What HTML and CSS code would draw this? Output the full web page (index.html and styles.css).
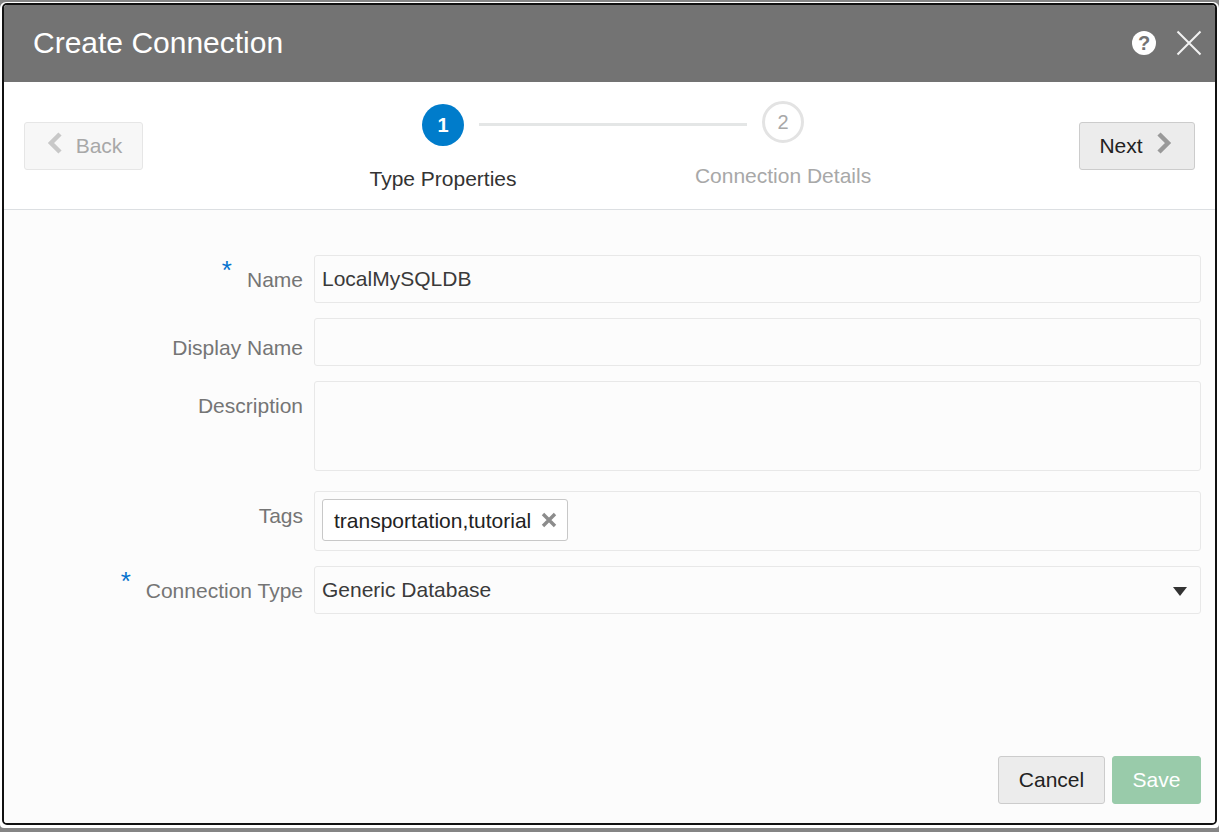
FILE: index.html
```html
<!DOCTYPE html>
<html lang="en">
<head>
    <meta charset="UTF-8">
    <meta name="viewport" content="width=device-width, initial-scale=1.0">
    <title>Create Connection</title>
    <link rel="stylesheet" href="styles.css">
</head>
<body>
    <div class="frame">
        <div class="dialog">
            <div class="header">
                <span class="title">Create Connection</span>
                <span class="help">?</span>
                <svg class="close" width="26" height="26" viewBox="0 0 26 26">
                    <path d="M1.5 1.5L24.5 24.5M24.5 1.5L1.5 24.5" stroke="#f2f2f2" stroke-width="2" fill="none"/>
                </svg>
            </div>

            <div class="wizard">
                <button class="btn btn-back" disabled>
                    <svg width="16" height="22" viewBox="0 0 16 22"><path d="M13 2L4 11L13 20" stroke="#c8c8c8" stroke-width="4.5" fill="none"/></svg>
                    <span>Back</span>
                </button>

                <div class="steps">
                    <div class="step step-active">
                        <div class="step-num">1</div>
                        <div class="step-label">Type Properties</div>
                    </div>
                    <div class="step-line"></div>
                    <div class="step step-todo">
                        <div class="step-num">2</div>
                        <div class="step-label">Connection Details</div>
                    </div>
                </div>

                <button class="btn btn-next">
                    <span>Next</span>
                    <svg width="16" height="22" viewBox="0 0 16 22"><path d="M3 2L12 11L3 20" stroke="#999" stroke-width="4.5" fill="none"/></svg>
                </button>
            </div>

            <div class="body">
                <div class="form">
                    <div class="label"><span class="req">*</span>Name</div>
                    <div class="field field-text">LocalMySQLDB</div>

                    <div class="label label-low">Display Name</div>
                    <div class="field"></div>

                    <div class="label">Description</div>
                    <div class="field field-area"></div>

                    <div class="label row-gap">Tags</div>
                    <div class="field field-tags row-gap">
                        <span class="tag">transportation,tutorial
                            <svg width="16" height="16" viewBox="0 0 16 16"><path d="M2 2L14 14M14 2L2 14" stroke="#8c8c8c" stroke-width="3.4" fill="none"/></svg>
                        </span>
                    </div>

                    <div class="label"><span class="req">*</span>Connection Type</div>
                    <div class="field field-text field-select">
                        <span>Generic Database</span>
                        <span class="arrow"></span>
                    </div>
                </div>

                <div class="footer">
                    <button class="btn btn-cancel">Cancel</button>
                    <button class="btn btn-save" disabled>Save</button>
                </div>
            </div>
        </div>
    </div>
</body>
</html>
```

FILE: styles.css
```css
html, body {
    margin: 0;
    height: 832px;
    overflow: hidden;
}

body {
    background: #858585;
    font-family: "Liberation Sans", Arial, sans-serif;
}

.frame {
    margin-top: 2px;
    height: 826px;
    box-sizing: border-box;
    padding: 1px 2px 3px 2px;
    background: #fff;
    border-radius: 6px 6px 4px 4px;
}

.dialog {
    height: 100%;
    box-sizing: border-box;
    border: 2px solid #111;
    border-radius: 5px;
    display: flex;
    flex-direction: column;
    overflow: hidden;
    background: #fff;
}

.header {
    height: 77px;
    flex: none;
    background: #737373;
    display: flex;
    align-items: center;
    padding: 0 13px 2px 29px;
    box-sizing: border-box;
    color: #fff;
}

.title {
    font-size: 30px;
    flex: 1;
}

.help {
    width: 24px;
    height: 24px;
    border-radius: 50%;
    background: #fff;
    color: #737373;
    font-size: 20px;
    font-weight: bold;
    line-height: 24px;
    text-align: center;
    margin-right: 20px;
}

.wizard {
    height: 127px;
    flex: none;
    box-sizing: border-box;
    display: flex;
    align-items: flex-start;
    padding: 40px 20px 0 20px;
}

.btn {
    height: 48px;
    box-sizing: border-box;
    border: 1px solid #ccc;
    border-radius: 3px;
    background: #ececec;
    color: #222;
    font-family: inherit;
    font-size: 21px;
    padding: 0;
    display: flex;
    align-items: center;
    justify-content: center;
}

.btn-back {
    width: 119px;
    background: #f7f7f7;
    border-color: #e6e6e6;
    color: #a8a8a8;
    gap: 13px;
    padding-left: 2px;
}

.btn-back svg, .btn-next svg {
    position: relative;
    top: -3px;
}

.btn-next {
    width: 116px;
    gap: 13px;
    padding-right: 3px;
    margin-left: auto;
}

.steps {
    display: flex;
    align-items: flex-start;
    margin-left: 279px;
    margin-top: -18px;
}

.step {
    width: 42px;
    display: flex;
    flex-direction: column;
    align-items: center;
}

.step-todo {
    margin-top: -3px;
}

.step-num {
    width: 42px;
    height: 42px;
    box-sizing: border-box;
    border-radius: 50%;
    text-align: center;
    font-size: 20px;
    flex: none;
}

.step-active .step-num {
    background: #007ccb;
    color: #fff;
    font-weight: bold;
    line-height: 42px;
}

.step-todo .step-num {
    border: 3px solid #e3e3e3;
    color: #a8a8a8;
    line-height: 36px;
}

.step-label {
    white-space: nowrap;
    font-size: 21px;
    margin-top: 21px;
    line-height: 24px;
}

.step-active .step-label {
    color: #333;
}

.step-todo .step-label {
    color: #a8a8a8;
}

.step-line {
    width: 268px;
    height: 3px;
    margin: 19px 15px 0 15px;
    background: #e4e6e6;
}

.body {
    flex: 1;
    background: #fcfcfc;
    border-top: 1px solid #dcdfe2;
    display: flex;
    flex-direction: column;
    padding: 45px 14px 19px 0;
}

.form {
    display: grid;
    grid-template-columns: 299px 887px;
    column-gap: 11px;
    row-gap: 15px;
    align-items: start;
}

.label {
    text-align: right;
    font-size: 21px;
    line-height: 24px;
    color: #757575;
    padding-top: 13px;
}

.label-low {
    padding-top: 18px;
}

.req {
    color: #0572ce;
    font-size: 26px;
    line-height: 0;
    display: inline-block;
    vertical-align: 8px;
    margin-right: 15px;
}

.field {
    height: 48px;
    box-sizing: border-box;
    border: 1px solid #e8e8e8;
    border-radius: 3px;
    background: #fcfcfc;
}

.field-text {
    font-size: 21px;
    color: #3a3a3a;
    padding-left: 7px;
    line-height: 46px;
}

.field-area {
    height: 90px;
}

.row-gap {
    margin-top: 5px;
}

.field-tags {
    height: 60px;
    padding: 7px;
}

.tag {
    display: inline-flex;
    align-items: center;
    height: 42px;
    box-sizing: border-box;
    border: 1px solid #c8c8c8;
    border-radius: 3px;
    background: #fff;
    color: #222;
    font-size: 21px;
    padding: 2px 10px 0 11px;
    gap: 10px;
}

.tag svg {
    position: relative;
    top: -1px;
}

.field-select {
    display: flex;
    justify-content: space-between;
    align-items: center;
    padding-right: 13px;
}

.arrow {
    width: 0;
    height: 0;
    border-left: 7.5px solid transparent;
    border-right: 7.5px solid transparent;
    border-top: 9px solid #333;
    margin-top: 2px;
}

.footer {
    margin-top: auto;
    display: flex;
    justify-content: flex-end;
    gap: 7px;
}

.btn-cancel {
    width: 107px;
}

.btn-save {
    width: 89px;
    background: #99cbaa;
    border-color: #99cbaa;
    color: #fff;
}
```
